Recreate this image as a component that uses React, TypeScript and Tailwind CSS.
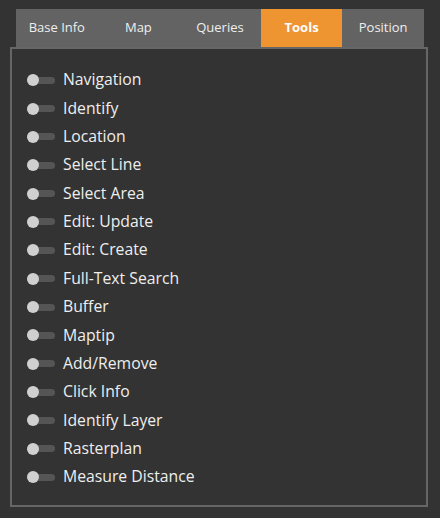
import React from "react";

const tabs = ["Base Info", "Map", "Queries", "Tools", "Position"];
const items = [
  "Navigation",
  "Identify",
  "Location",
  "Select Line",
  "Select Area",
  "Edit: Update",
  "Edit: Create",
  "Full-Text Search",
  "Buffer",
  "Maptip",
  "Add/Remove",
  "Click Info",
  "Identify Layer",
  "Rasterplan",
  "Measure Distance",
];

export default function App() {
  return (
    <div
      className="w-[440px] h-[518px] bg-[#333333] pt-[9px] overflow-hidden"
      style={{ fontFamily: '"Open Sans", "Noto Sans", sans-serif' }}
    >
      <div className="ml-[16px] w-[408px] h-[38px] flex bg-[#636363]">
        {tabs.map((t) => (
          <div
            key={t}
            className={
              t === "Tools"
                ? "flex-1 flex items-center justify-center bg-[#ee9430] text-white font-bold text-[13px]"
                : "flex-1 flex items-center justify-center text-[#eeeeee] text-[13px]"
            }
          >
            {t}
          </div>
        ))}
      </div>
      <div className="ml-[10px] w-[418px] h-[460px] border-2 border-[#666666] pt-[17px] pl-[15px]">
        {items.map((it) => (
          <div key={it} className="h-[28.36px] flex items-center">
            <div className="relative w-[28px] h-[12px] flex items-center shrink-0">
              <div className="w-[28px] h-[7px] rounded-full bg-[#555555]" />
              <div className="absolute left-0 top-0 w-[12px] h-[12px] rounded-full bg-[#d0d0d0]" />
            </div>
            <span className="ml-[8px] text-[15.75px] text-[#eeeeee] leading-none">{it}</span>
          </div>
        ))}
      </div>
    </div>
  );
}
